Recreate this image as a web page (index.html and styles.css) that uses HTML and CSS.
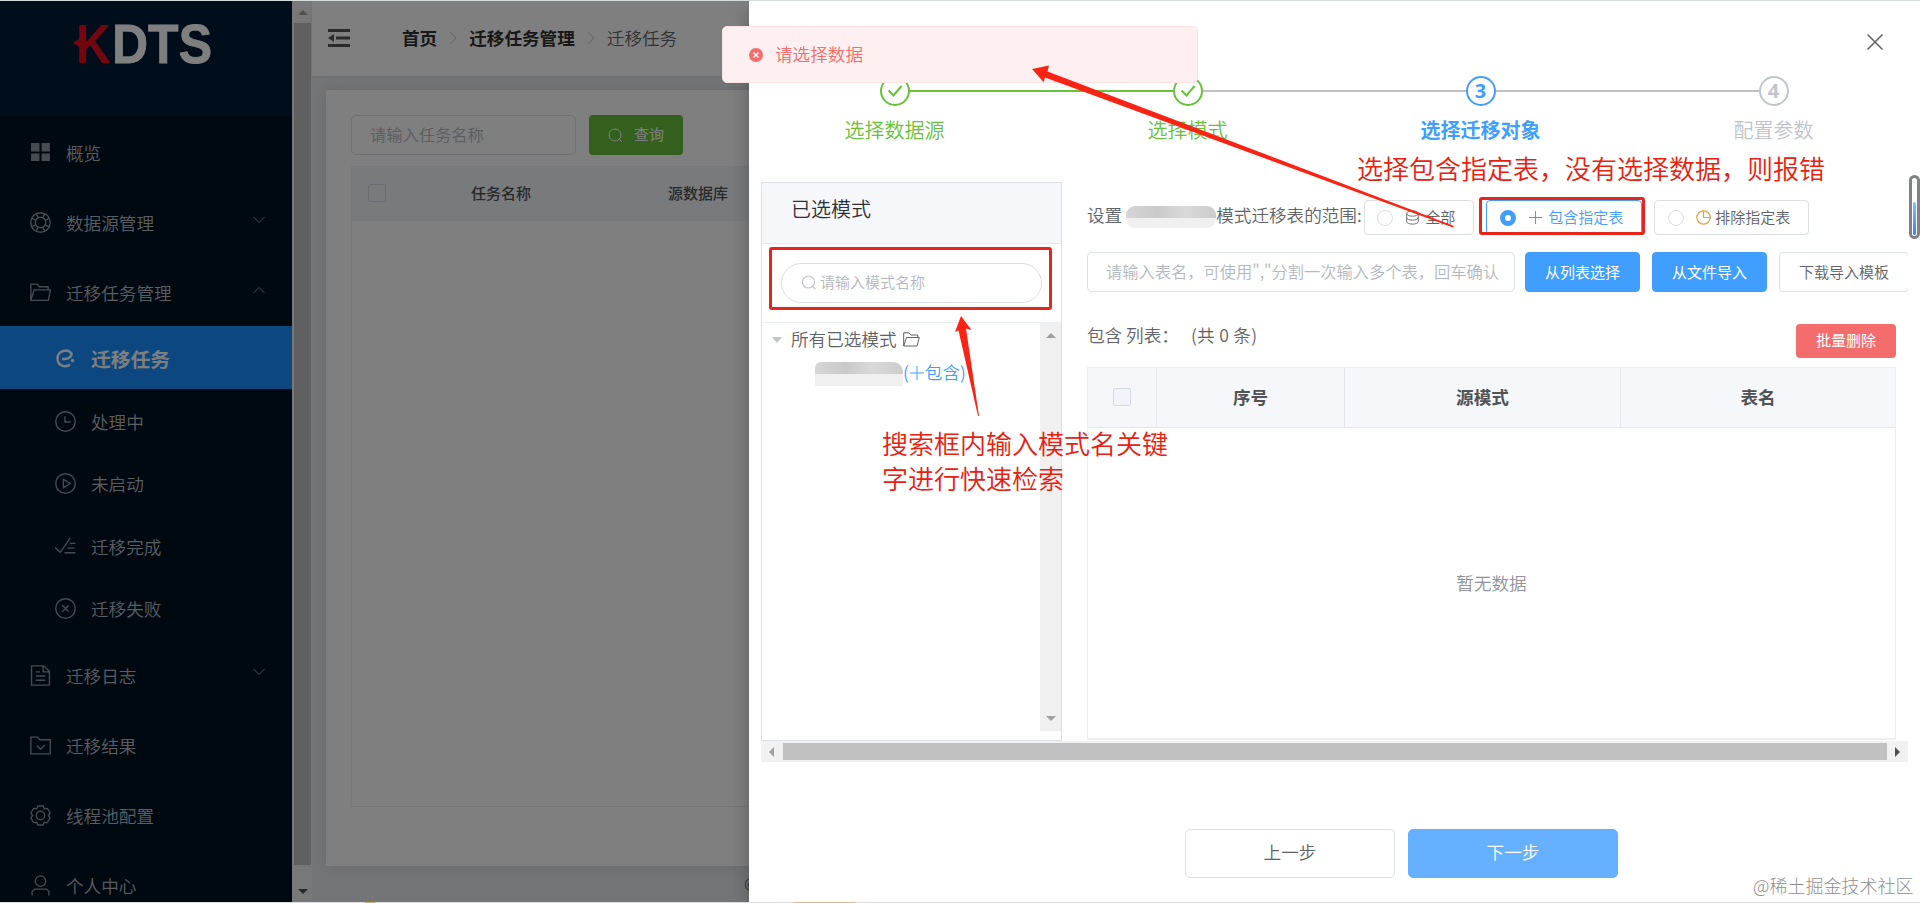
FILE: index.html
```html
<!DOCTYPE html>
<html lang="zh-CN">
<head>
  <meta charset="UTF-8">
  <title>KDTS 迁移任务</title>
  <link rel="stylesheet" href="styles.css">
</head>
<body>
  <div class="app">
    <aside class="sidebar">
      <div class="logo">
        <svg width="160" height="70" viewBox="0 0 160 70">
          <path d="M0 30 L9 24 V36 Z" fill="#e60f1e"/>
          <text x="3" y="49.500" class="logo-k" textLength="35" lengthAdjust="spacingAndGlyphs">K</text>
          <text x="39" y="49.500" class="logo-text" textLength="100" lengthAdjust="spacingAndGlyphs">DTS</text>
        </svg>
      </div>
      <ul class="menu">
        <li class="item">
          <svg class="icon" viewBox="0 0 20 20"><path class="fill" d="M1 1h8v8H1zM11 1h8v8h-8zM1 11h8v7H1zM11 11h8v7h-8z"/></svg>
          <span>概览</span>
        </li>
        <li class="item">
          <svg class="icon" viewBox="0 0 20 20"><circle cx="10" cy="10" r="9.3"/><circle cx="10" cy="10" r="5"/><path d="M2 6l4 2M6 2l2 4M14 2l-2 4M18 6l-4 2M2 14l4-2M6 18l2-4M14 18l-2-4M18 14l-4-2"/></svg>
          <span>数据源管理</span>
          <svg class="arrow" viewBox="0 0 12 8"><path d="M.5 1l5.5 5.5L11.500 1"/></svg>
        </li>
        <li class="item">
          <svg class="icon" viewBox="0 0 20 20"><path d="M.8 17.500V2h6l2 2.500h8.500v3M.8 17.500L4 7.500h15.500L17.500 17.500z"/></svg>
          <span>迁移任务管理</span>
          <svg class="arrow" viewBox="0 0 12 8"><path d="M.5 7L6 1.500 11.500 7"/></svg>
        </li>
        <li class="sub active">
          <svg class="icon" viewBox="0 0 20 20"><path class="thick" d="M7 10.500h3.500c3.500 0 6.500-3 6-5.500C12-.5 2.500 2.500 2.500 10c0 7.500 8 9.500 12.500 6"/><circle class="fill" cx="17.500" cy="12" r="1.700"/></svg>
          <span>迁移任务</span>
        </li>
        <li class="sub">
          <svg class="icon" viewBox="0 0 20 20"><circle cx="10" cy="10" r="9.300"/><path d="M9.500 5v5.500H15"/></svg>
          <span>处理中</span>
        </li>
        <li class="sub">
          <svg class="icon" viewBox="0 0 20 20"><circle cx="10" cy="10" r="9.300"/><path d="M8 6v8l6.500-4z"/></svg>
          <span>未启动</span>
        </li>
        <li class="sub">
          <svg class="icon" viewBox="0 0 20 20"><path d="M0 11l5 4.500L14.500 2M14 7h5.500M12 11.500h6.500M9 16h10.500"/></svg>
          <span>迁移完成</span>
        </li>
        <li class="sub">
          <svg class="icon" viewBox="0 0 20 20"><circle cx="10" cy="10" r="9.300"/><path d="M7 7l6 6M13 7l-6 6"/></svg>
          <span>迁移失败</span>
        </li>
        <li class="item">
          <svg class="icon" viewBox="0 0 20 20"><path d="M1.500.800H13L18.500 6v13.200h-17zM12.500 1v5.500h6M5.500 6.500h4M5.500 10.500h9M5.500 14.500h9"/></svg>
          <span>迁移日志</span>
          <svg class="arrow" viewBox="0 0 12 8"><path d="M.5 1l5.500 5.500L11.500 1"/></svg>
        </li>
        <li class="item">
          <svg class="icon" viewBox="0 0 20 20"><path d="M.8 2h6.500l2 2.500h10V18H.8zM6.500 10l3.500 3.500 4-4"/></svg>
          <span>迁移结果</span>
        </li>
        <li class="item">
          <svg class="icon" viewBox="0 0 20 20"><circle cx="10" cy="10" r="4"/><path d="M7.500 1h5l1 2.500 3-.3 2.700 4.300-1.700 2.500 1.700 2.500-2.700 4.300-3-.3-1 2.500h-5l-1-2.500-3 .3L.8 12.500 2.500 10 .8 7.500l2.700-4.300 3 .3z"/></svg>
          <span>线程池配置</span>
        </li>
        <li class="item">
          <svg class="icon" viewBox="0 0 20 20"><circle cx="10" cy="5.800" r="5"/><path d="M2 19.500v-4l2.500-2h11l2.500 2v4"/></svg>
          <span>个人中心</span>
        </li>
      </ul>
    </aside>
    <div class="side-scroll">
      <i class="tri up"></i>
      <div class="thumb"></div>
      <i class="tri down"></i>
    </div>
    <main class="main">
      <header class="topbar">
        <svg class="fold" viewBox="0 0 22 18"><path d="M0 1.500h22M8 9h14M0 16.500h22" stroke="#555" stroke-width="2.800"/><path d="M0 9l6-4v8z" fill="#555"/></svg>
        <b>首页</b>
        <svg class="sep" viewBox="0 0 8 14"><path d="M1 1l6 6-6 6"/></svg>
        <b>迁移任务管理</b>
        <svg class="sep" viewBox="0 0 8 14"><path d="M1 1l6 6-6 6"/></svg>
        <span>迁移任务</span>
      </header>
      <section class="card">
        <div class="query">
          <div class="input">请输入任务名称</div>
          <div class="btn-query">
            <svg width="15" height="15" viewBox="0 0 15 15"><circle cx="7" cy="7" r="6"/><path d="M11 11l3 3"/></svg>
            <span>查询</span>
          </div>
        </div>
        <div class="task-table">
          <div class="task-head">
            <i class="checkbox"></i>
            <span class="th-name">任务名称</span>
            <span class="th-src">源数据库</span>
          </div>
        </div>
      </section>
      <footer class="copyright">©</footer>
    </main>
  </div>

  <div class="mask"></div>

  <div class="drawer">
    <svg class="close" viewBox="0 0 16 16"><path d="M.5.5l15 15M15.500.5l-15 15"/></svg>
    <div class="steps">
      <div class="step done">
        <div class="circle"><svg width="16" height="12" viewBox="0 0 16 12"><path d="M1.500 5.500l5 5L14.500 1"/></svg></div>
        <p>选择数据源</p>
      </div>
      <div class="step done wait-line">
        <div class="circle"><svg width="16" height="12" viewBox="0 0 16 12"><path d="M1.500 5.500l5 5L14.500 1"/></svg></div>
        <p>选择模式</p>
      </div>
      <div class="step current">
        <div class="circle">3</div>
        <p>选择迁移对象</p>
      </div>
      <div class="step">
        <div class="circle">4</div>
        <p>配置参数</p>
      </div>
    </div>

    <div class="body">
      <div class="schema">
        <div class="schema-title">已选模式</div>
        <div class="schema-search">
          <div class="pill">
            <svg width="14" height="15" viewBox="0 0 14 15"><circle cx="6.500" cy="7" r="6"/><path d="M10.500 11.500l3 2.500"/></svg>
            <span>请输入模式名称</span>
          </div>
        </div>
        <div class="tree">
          <div class="nodes">
            <div class="node">
              <i class="caret"></i>
              <span>所有已选模式</span>
              <svg width="17" height="15" viewBox="0 0 17 15"><path d="M.7 14V.8h5l2 2.200h7v2.500M.7 14L3.500 5.500h12.800L14 14z"/></svg>
            </div>
            <div class="node leaf">
              <i class="mosaic small"></i>
              <span>(<svg width="16" height="14" viewBox="0 0 16 14"><path d="M8 0v14M1 7h14"/></svg>包含)</span>
            </div>
          </div>
          <div class="tree-scroll">
            <i class="tri up"></i>
            <i class="tri down"></i>
          </div>
        </div>
      </div>

      <div class="content">
        <div class="range">
          <span>设置</span>
          <i class="mosaic"></i>
          <span class="range-label">模式迁移表的范围:</span>
          <div class="radio all">
            <i></i>
            <svg width="13" height="15" viewBox="0 0 13 15"><ellipse cx="6.500" cy="3.500" rx="5.800" ry="2.700"/><path d="M.7 3.500v8c0 3.500 11.600 3.500 11.600 0v-8M.7 7.500c0 3.500 11.600 3.500 11.600 0"/></svg>
            <span>全部</span>
          </div>
          <div class="radio checked">
            <i></i>
            <svg width="13" height="13" viewBox="0 0 13 13"><path d="M6.500 0v13M0 6.500h13"/></svg>
            <span>包含指定表</span>
          </div>
          <div class="radio exclude">
            <i></i>
            <svg width="15" height="15" viewBox="0 0 15 15"><circle cx="7.500" cy="7.500" r="6.700"/><path d="M7.500.8v6.700h6.700"/></svg>
            <span>排除指定表</span>
          </div>
        </div>
        <div class="tools">
          <div class="input">请输入表名，可使用","分割一次输入多个表，回车确认</div>
          <div class="btn primary">从列表选择</div>
          <div class="btn primary">从文件导入</div>
          <div class="btn">下载导入模板</div>
        </div>
        <div class="list-title">
          <div class="list-name"><span>包含 列表：</span><span class="total">(共 0 条)</span></div>
          <div class="btn-delete">批量删除</div>
        </div>
        <div class="table">
          <div class="table-head">
            <div class="col-check"><i class="checkbox"></i></div>
            <div class="col-no">序号</div>
            <div class="col-schema">源模式</div>
            <div class="col-table">表名</div>
          </div>
          <div class="empty">暂无数据</div>
        </div>
      </div>
    </div>
    <div class="h-scroll">
      <i class="tri left"></i>
      <div class="thumb"></div>
      <i class="tri right"></i>
    </div>
    <div class="actions">
      <div class="action">上一步</div>
      <div class="action next">下一步</div>
    </div>
    <div class="page-scroll"><i></i></div>
  </div>

  <div class="message">
    <svg width="14" height="14" viewBox="0 0 14 14"><circle cx="7" cy="7" r="7" fill="#f56c6c"/><path d="M4.500 4.500l5 5M9.500 4.500l-5 5" stroke="#fff" stroke-width="1.300"/></svg>
    <span>请选择数据</span>
  </div>

  <!-- 标注 -->
  <div class="mark mark-search"></div>
  <div class="mark mark-radio"></div>
  <svg class="arrows" viewBox="0 0 1920 903">
    <path d="M1032 69L1049 65.500 1047.500 71.500 1454 226 1453 227.500 1045 77.500 1043.500 82z"/>
    <path d="M961 316L971.500 330 966 328.500 979 416 978 416 958.500 330.500 955 332z"/>
  </svg>
  <p class="note note-radio">选择包含指定表，没有选择数据，则报错</p>
  <p class="note note-search">搜索框内输入模式名关键<br>字进行快速检索</p>
  <p class="watermark">@稀土掘金技术社区</p>

  <div class="edge-top"></div>
  <div class="edge-bottom"><i class="yellow"></i><i class="orange"></i></div>
</body>
</html>
```

FILE: styles.css
```css
* {
  box-sizing: border-box;
}

body {
  margin: 0;
  width: 1920px;
  height: 903px;
  overflow: hidden;
  position: relative;
  background: #fff;
  color: #606266;
  font-family: "Noto Sans CJK SC", sans-serif;
  font-weight: 350;
  font-size: 17.600px;
  line-height: 26px;
}

p,
ul {
  margin: 0;
  padding: 0;
  list-style: none;
}

svg {
  fill: none;
  flex-shrink: 0;
}

i {
  display: block;
  flex-shrink: 0;
}

span {
  white-space: nowrap;
}

.app {
  display: flex;
  height: 903px;
}

/* 左侧菜单 */
.sidebar {
  width: 292px;
  height: 903px;
  overflow: hidden;
  background: #001220;
  color: #b4bcc4;
}

.logo {
  height: 116px;
  padding: 13px 0 0 73px;
  background: #001d36;
}

.logo svg {
  display: block;
}

.logo-k,
.logo-text {
  font-family: "Liberation Sans", Arial, sans-serif;
  font-weight: bold;
  font-size: 56px;
  fill: #e60f1e;
}

.logo-text {
  fill: #fff;
  stroke: #fff;
  stroke-width: 0.800;
}

.item,
.sub {
  display: flex;
  align-items: center;
  height: 70px;
  padding: 4px 26px 0 30px;
  gap: 15px;
}

.sub {
  height: 62.500px;
  padding-left: 55px;
}

.sub.active {
  background: #1890ff;
  color: #fff;
  font-weight: bold;
  font-size: 19.800px;
}

.icon {
  width: 21px;
  height: 21px;
  margin-top: -1px;
  stroke: #8e979f;
  stroke-width: 1.300;
}

.active .icon {
  stroke: #fff;
  width: 20px;
  margin-right: 1px;
}

.icon .thick {
  stroke-width: 2.400;
}

.icon .fill {
  fill: #8e979f;
  stroke: none;
}

.active .icon .fill {
  fill: #fff;
}

.arrow {
  width: 12px;
  height: 8px;
  margin: -7px 1px 0 auto;
  stroke: #8e979f;
}

/* 滚动条 */
.tri {
  border: 5px solid transparent;
  width: 0;
  height: 0;
}

.tri.up {
  border-bottom-color: #a0a0a0;
  border-top-width: 0;
}

.tri.down {
  border-top-color: #a0a0a0;
  border-bottom-width: 0;
}

.tri.left {
  border-right-color: #a0a0a0;
  border-left-width: 0;
}

.tri.right {
  border-left-color: #505050;
  border-right-width: 0;
}

.side-scroll {
  display: flex;
  flex-direction: column;
  align-items: center;
  justify-content: space-between;
  width: 20px;
  padding: 10px 1px 9px 2px;
  background: #f1f1f1;
}

.side-scroll .tri.down {
  border-top-color: #505050;
}

.side-scroll .thumb {
  width: 17px;
  height: 842px;
  margin-bottom: 17px;
  background: #c1c1c1;
}

/* 主区域 */
.main {
  width: 1608px;
  background: #e8eaed;
}

.topbar {
  display: flex;
  align-items: center;
  height: 76px;
  padding-left: 16px;
  background: #fff;
  box-shadow: 0 1px 4px rgba(0, 21, 41, 0.08);
  color: #303133;
}

.topbar span {
  color: #606266;
}

.topbar b,
.topbar span {
  margin-top: -1px;
}

.fold {
  width: 22px;
  height: 18px;
  margin-right: 52px;
}

.sep {
  width: 8px;
  height: 14px;
  margin: 0 12px;
  stroke: #c0c4cc;
}

.card {
  height: 776px;
  margin: 14px 14px 0;
  padding: 25px;
  background: #fff;
  box-shadow: 0 0 12px rgba(0, 0, 0, 0.1);
}

.input {
  height: 40px;
  padding: 0 18px;
  border: 1px solid #dcdfe6;
  border-radius: 5px;
  color: #b4b8c0;
  font-size: 16.250px;
  line-height: 37px;
  white-space: nowrap;
}

.query {
  display: flex;
  gap: 13px;
}

.query .input {
  width: 225px;
}

.btn-query {
  display: flex;
  align-items: center;
  justify-content: center;
  gap: 11px;
  width: 94px;
  height: 40px;
  border-radius: 4px;
  background: #67c23a;
  color: #fff;
  font-size: 15px;
  font-weight: 400;
}

.btn-query svg {
  stroke: #fff;
}

.btn-query span {
  margin-top: -2px;
}

.task-table {
  height: 641px;
  margin-top: 11px;
  border: 1px solid #ebeef5;
}

.task-head {
  display: flex;
  align-items: center;
  height: 54px;
  padding: 0 0 2px 16px;
  background: #f2f4f8;
  color: #505256;
  font-size: 15px;
  font-weight: 500;
}

.checkbox {
  width: 18px;
  height: 18px;
  border: 1px solid #d3dae6;
  border-radius: 2px;
  background: #f1f5fb;
}

.th-name {
  margin-left: 85px;
}

.th-src {
  margin-left: 137px;
}

.copyright {
  padding: 5px 0 0 432px;
}

.mask {
  position: absolute;
  inset: 0;
  background: rgba(0, 0, 0, 0.5);
}

/* 抽屉 */
.drawer {
  position: absolute;
  top: 0;
  left: 749px;
  width: 1171px;
  height: 903px;
  padding-top: 76px;
  background: #fff;
  box-shadow: 0 8px 20px -3px rgba(0, 0, 0, 0.35);
}

.close {
  position: absolute;
  top: 34px;
  left: 1118px;
  width: 16px;
  height: 16px;
  stroke: #606266;
  stroke-width: 1.500;
}

.steps {
  display: flex;
  height: 106px;
  margin-left: -1px;
}

.step {
  width: 293px;
  display: flex;
  flex-direction: column;
  align-items: center;
  position: relative;
  color: #c0c4cc;
  font-size: 20px;
}

.step p {
  margin-top: 11px;
  white-space: nowrap;
}

.circle {
  display: flex;
  align-items: center;
  justify-content: center;
  width: 30px;
  height: 30px;
  border: 2px solid #c0c4cc;
  border-radius: 50%;
  background: #fff;
  font-family: "Open Sans", sans-serif;
  font-size: 20px;
  font-weight: 700;
}

.circle svg {
  stroke: #67c23a;
  stroke-width: 2;
}

/* 步骤之间的连接线 */
.step:not(:last-child)::after {
  content: "";
  position: absolute;
  top: 14px;
  left: 162px;
  width: 263px;
  height: 2px;
  background: #bfc1c5;
}

.step.done {
  color: #67c23a;
}

.done .circle {
  border-color: #67c23a;
}

.step.done:not(.wait-line)::after {
  background: #67c23a;
}

.step.current {
  color: #409eff;
  font-weight: bold;
}

.current .circle {
  border-color: #409eff;
}

.body {
  display: flex;
  height: 559px;
  margin-left: 12px;
  width: 1147px;
  overflow: hidden;
}

.schema {
  display: flex;
  flex-direction: column;
  flex-shrink: 0;
  width: 301px;
  border: 1px solid #dcdfe6;
}

.schema-title {
  height: 61px;
  padding: 13px 0 0 29px;
  border-bottom: 1px solid #e4e7ed;
  background: #f5f7fa;
  color: #303133;
  font-size: 20px;
}

.schema-search {
  height: 79px;
  padding: 19px 19px 0;
  border-bottom: 1px solid #ebeef5;
}

.pill {
  display: flex;
  align-items: center;
  gap: 4px;
  height: 40px;
  padding: 0 0 1px 20px;
  border: 1px solid #dcdfe6;
  border-radius: 20px;
  color: #b4b8c0;
  font-size: 15px;
}

.pill svg {
  stroke: #c0c4cc;
  stroke-width: 1.200;
}

.pill span {
  margin-top: -2px;
}

.tree {
  display: flex;
  justify-content: space-between;
  height: 408px;
}

.node {
  display: flex;
  align-items: center;
  height: 33px;
  padding-left: 10px;
}

.node span {
  margin-top: -2px;
}

.node > svg {
  margin-left: 6px;
  stroke: #606266;
}

.caret {
  width: 0;
  height: 0;
  margin-right: 9px;
  border: 5px solid transparent;
  border-top: 6px solid #c0c4cc;
  border-bottom: 0;
}

.leaf {
  padding-left: 53px;
  color: #409eff;
}

.leaf span svg {
  margin: 0;
  vertical-align: -1px;
  stroke: #409eff;
}

.mosaic {
  width: 90px;
  height: 22px;
  margin: 0 0 2px 4px;
  border-radius: 9px;
  background: linear-gradient(90deg, #d6d6d6, #c9c9c9 35%, #d9d9d9 65%, #cccccc) top / 100% 12px no-repeat, #f0f0f0;
}

.mosaic.small {
  width: 88px;
  height: 24px;
  margin: 3px 0 0;
  border-radius: 6px 10px 0 0;
}

.tree-scroll {
  display: flex;
  flex-direction: column;
  align-items: center;
  justify-content: space-between;
  width: 21px;
  padding: 10px 0;
  background: #f0f0f0;
}

.content {
  flex-shrink: 0;
  width: 821px;
  margin-left: 25px;
}

.range {
  display: flex;
  align-items: center;
  height: 35px;
  margin-top: 18px;
}

.range > span {
  margin-top: -5px;
}

.range-label {
  width: 148px;
}

.radio {
  display: flex;
  align-items: center;
  flex-shrink: 0;
  height: 35px;
  border: 1px solid #dcdfe6;
  border-radius: 4px;
  font-size: 15px;
}

.radio span {
  margin-top: -1px;
}

.radio i {
  width: 16px;
  height: 16px;
  border: 1px solid #dcdfe6;
  border-radius: 50%;
}

.radio svg {
  margin: 0 6px 0 13px;
  stroke: #707276;
}

.all {
  width: 110px;
  padding-left: 12px;
}

.checked {
  width: 156px;
  margin: 0 12px;
  padding-left: 13px;
  border-color: #409eff;
  color: #409eff;
}

.checked i {
  border: 5px solid #409eff;
}

.checked svg {
  stroke: #409eff;
}

.exclude {
  width: 155px;
  padding-left: 13px;
}

.exclude svg {
  margin: 0 4px 0 12px;
  stroke: #e6a23c;
  stroke-width: 1.200;
}

.tools {
  display: flex;
  margin-top: 17px;
}

.tools .input {
  width: 428px;
  margin-right: 10px;
}

.btn {
  flex-shrink: 0;
  width: 115px;
  height: 40px;
  padding-left: 19px;
  border: 1px solid #dcdfe6;
  border-radius: 4px;
  font-size: 15px;
  line-height: 37px;
  white-space: nowrap;
}

.btn.primary {
  margin-right: 12px;
  border-color: #409eff;
  background: #409eff;
  color: #fff;
  font-weight: 400;
}

.btn:last-child {
  width: 130px;
}

.list-title {
  display: flex;
  justify-content: space-between;
  height: 34px;
  margin: 32px 12px 9px 0;
}

.list-name {
  display: flex;
  margin-top: -2px;
}

.total {
  margin-left: 12px;
  letter-spacing: 0.300px;
}

.btn-delete {
  width: 100px;
  height: 34px;
  border-radius: 4px;
  background: #f56c6c;
  color: #fff;
  font-size: 15px;
  font-weight: 400;
  line-height: 32px;
  text-align: center;
}

.table {
  width: 809px;
  height: 373px;
  border: 1px solid #ebeef5;
  border-bottom: 2px solid #ebedf2;
}

.table-head {
  display: flex;
  height: 60px;
  border-bottom: 1px solid #e2e6ee;
  background: #f5f7fa;
  color: #505256;
  font-weight: bold;
}

.table-head div {
  display: flex;
  align-items: center;
  justify-content: center;
  padding-bottom: 1px;
  border-right: 1px solid #e2e6ee;
}

.table-head .col-check {
  width: 69px;
}

.table-head .col-no {
  width: 188px;
}

.table-head .col-schema {
  width: 276px;
}

.table-head .col-table {
  flex: 1;
  border-right: 0;
}

.empty {
  padding-top: 142px;
  color: #909399;
  text-align: center;
}

.h-scroll {
  display: flex;
  align-items: center;
  justify-content: space-between;
  width: 1147px;
  height: 21px;
  margin-left: 12px;
  padding: 0 8px;
  background: #f1f1f1;
}

.h-scroll .thumb {
  width: 1104px;
  height: 17px;
  background: #c1c1c1;
}

.actions {
  display: flex;
  justify-content: center;
  gap: 13px;
  margin: 67px 0 0 134px;
}

.action {
  width: 210px;
  height: 49px;
  border: 1px solid #dcdfe6;
  border-radius: 5px;
  line-height: 44px;
  text-align: center;
}

.action.next {
  border-color: #66b1ff;
  background: #66b1ff;
  color: #fff;
}

.page-scroll {
  position: absolute;
  top: 175px;
  right: 0;
  width: 11px;
  height: 64px;
  padding: 24px 1px 0;
  border: 3px solid #7f8184;
  border-radius: 6px;
}

.page-scroll i {
  height: 33px;
  border-radius: 2px;
  background: linear-gradient(#7cc4ff, #3a82f7);
}

/* 错误提示 */
.message {
  position: absolute;
  top: 26px;
  left: 722px;
  display: flex;
  align-items: center;
  gap: 12px;
  width: 476px;
  height: 57px;
  padding-left: 26px;
  border: 1px solid #fde2e2;
  border-radius: 5px;
  background: #fef0f0;
  color: #f56c6c;
}

.message span {
  margin-top: -2px;
}

.mark {
  position: absolute;
  border: 3px solid #e8251a;
  border-radius: 3px;
}

.mark-search {
  top: 247px;
  left: 769px;
  width: 283px;
  height: 63px;
}

.mark-radio {
  top: 197px;
  left: 1479px;
  width: 166px;
  height: 38px;
}

.arrows {
  position: absolute;
  top: 0;
  left: 0;
  width: 1920px;
  height: 903px;
  fill: #fa2314;
}

.note {
  position: absolute;
  color: #e8200f;
  font-size: 26px;
  line-height: 35px;
  white-space: nowrap;
}

.note-radio {
  top: 150px;
  left: 1357px;
}

.note-search {
  top: 425px;
  left: 882px;
}

.watermark {
  position: absolute;
  top: 872px;
  left: 1753px;
  color: #8f8f8f;
  font-size: 18px;
  font-weight: 300;
  white-space: nowrap;
}

.edge-top,
.edge-bottom {
  position: absolute;
  left: 0;
  width: 1920px;
  height: 1px;
}

.edge-top {
  top: 0;
  background: #d5dcdd;
}

.edge-bottom {
  top: 902px;
  display: flex;
  background: #dcdde6;
}

.yellow {
  width: 10px;
  height: 1px;
  margin-left: 365px;
  background: #e0b040;
}

.orange {
  width: 61px;
  height: 1px;
  margin-left: 419px;
  background: #f8b27c;
}
```
